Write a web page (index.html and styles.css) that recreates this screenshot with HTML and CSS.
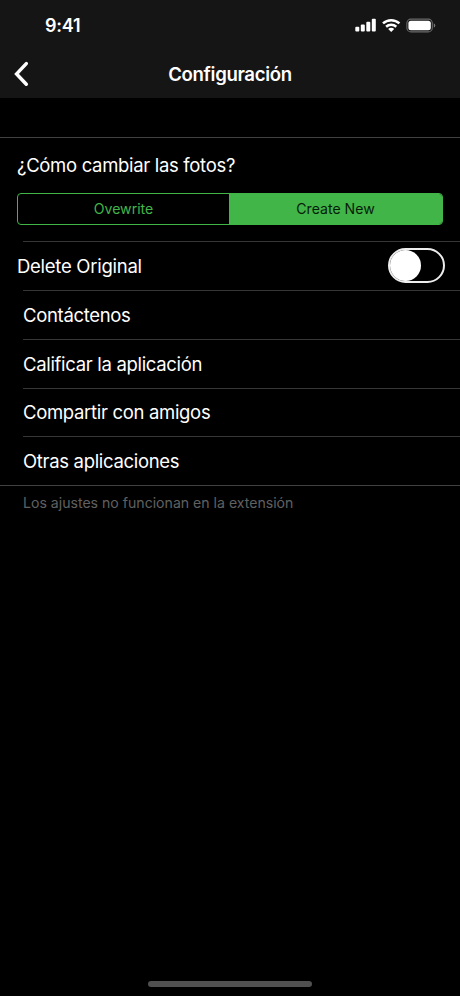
FILE: index.html
```html
<!DOCTYPE html>
<html lang="es">
<head>
<meta charset="utf-8">
<title>Configuración</title>
<link rel="stylesheet" href="styles.css">
</head>
<body>
<div class="screen">
  <header class="header">
    <div class="status">
      <span class="time">9:41</span>
      <svg class="status-icons" width="82" height="18" viewBox="0 0 82 18" fill="#fff">
        <rect x="0.3" y="9.8" width="4" height="4.6" rx="1"/>
        <rect x="5.8" y="7.5" width="4" height="6.9" rx="1"/>
        <rect x="11.3" y="4.7" width="4" height="9.7" rx="1"/>
        <rect x="16.8" y="1.8" width="4" height="12.6" rx="1"/>
        <g fill="none" stroke="#fff" stroke-width="2.5">
          <path d="M28 6.4a12 12 0 0 1 16.4 0"/>
          <path d="M31.1 9.8a7.6 7.6 0 0 1 10.2 0"/>
        </g>
        <path d="M33.2 12a4.2 4.2 0 0 1 6 0L36.2 15z"/>
        <rect x="51.9" y="2.1" width="25.4" height="12.8" rx="4" fill="none" stroke="#6b6b6b" stroke-width="1.1"/>
        <rect x="53.4" y="3.7" width="22.4" height="9.6" rx="2.5"/>
        <path d="M78.8 6.3v4.4q1.5-.7 1.5-2.2T78.8 6.3z" fill="#777"/>
      </svg>
    </div>
    <nav class="nav">
      <svg class="back" width="16" height="26" viewBox="0 0 16 26" fill="none" stroke="#fff" stroke-width="3.5" stroke-linecap="round" stroke-linejoin="miter"><path d="M12.3 2.6L2.6 12.9L12.3 23.2"/></svg>
      <h1 class="title">Configuración</h1>
    </nav>
  </header>
  <main class="settings">
    <section class="row photos">
      <div class="label question">¿Cómo cambiar las fotos?</div>
      <div class="segmented">
        <div class="segment overwrite"><span>Ovewrite</span></div>
        <div class="segment selected"><span>Create New</span></div>
      </div>
    </section>
    <div class="row delete"><span class="label delete-label">Delete Original</span><span class="switch"><span class="knob"></span></span></div>
    <div class="row"><span class="label contact">Contáctenos</span></div>
    <div class="row"><span class="label rate">Calificar la aplicación</span></div>
    <div class="row compact"><span class="label share">Compartir con amigos</span></div>
    <div class="row"><span class="label other">Otras aplicaciones</span></div>
  </main>
  <p class="note"><span>Los ajustes no funcionan en la extensión</span></p>
  <div class="home"></div>
</div>
</body>
</html>
```
FILE: styles.css
```css
* { box-sizing: border-box; }
body { margin: 0; background: #000; color: #fff; font-family: Inter, "Liberation Sans", sans-serif; }
.screen { width: 460px; height: 996px; display: flex; flex-direction: column; background: #000; overflow: hidden; }
.header { height: 98px; background: #151515; flex: none; }
.status { height: 50px; padding: 1px 23px 0 45px; display: flex; justify-content: space-between; align-items: center; }
.time { font-size: 18px; line-height: 22px; font-weight: 600; letter-spacing: -.2px; }
.status-icons { margin-top: 0; }
.nav { height: 48px; display: grid; grid-template-columns: 60px 1fr 60px; align-items: center; }
.back { margin-left: 14px; }
.title { margin: 0; padding-bottom: 1px; text-align: center; font-size: 18.6px; line-height: 24px; font-weight: 600; letter-spacing: -.33px; }
.settings { margin-top: 39px; border-top: 1px solid #414141; border-bottom: 1px solid #414141; }
.row { height: 49px; margin-left: 23px; display: flex; align-items: center; border-top: 1px solid #363636; }
.compact { height: 48px; }
.label { padding-bottom: 1px; font-size: 18.5px; line-height: 24px; letter-spacing: -.32px; white-space: nowrap; }
.photos { height: 103px; margin: 0; padding: 15px 17px 0; display: block; border: 0; }
.segmented { height: 32px; margin-top: 15px; display: flex; border: 1px solid #42b549; border-radius: 4px; overflow: hidden; }
.segment { flex: none; width: 211px; padding-bottom: 1px; display: flex; align-items: center; justify-content: center; font-size: 14.1px; color: #42b549; }
.selected { flex: 1; background: #42b549; color: #071d08; }
.delete .delete-label { margin-left: -6px; letter-spacing: -.27px; }
.switch { width: 57px; height: 35px; margin: 0 15px 1px auto; border: 2px solid #ededed; border-radius: 18px; }
.knob { display: block; width: 31px; height: 31px; border-radius: 50%; background: #fff; }
.note { margin: 7px 0 0 23px; font-size: 14.1px; line-height: 19px; color: #606060; white-space: nowrap; }
.home { width: 164px; height: 6px; margin: auto auto 9px; border-radius: 3px; background: #505050; }
```
